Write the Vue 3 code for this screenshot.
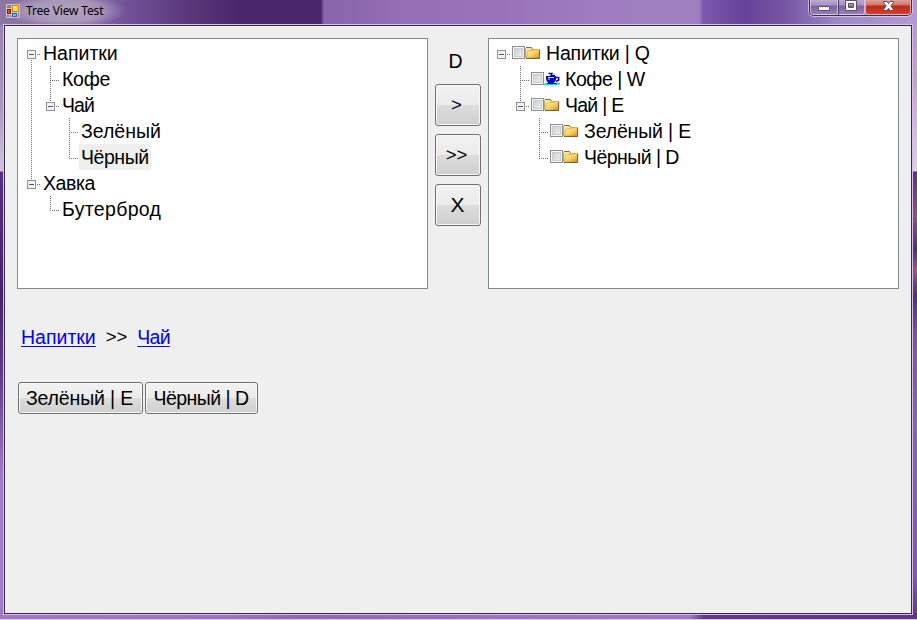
<script setup>
// Guide codes per indent cell: v = through line, t = branch, l = last branch,
// a/b = line above/below an expander, x = expander, blank = nothing.
// "track" is the letter spacing of the label in pixels.
const leftTree = [
  { cells: ['xb'], label: 'Напитки', track: 0 },
  { cells: ['v', 't'], label: 'Кофе', track: -0.25 },
  { cells: ['v', 'xa'], label: 'Чай', track: -0.9 },
  { cells: ['v', '', 't'], label: 'Зелёный', track: 0 },
  { cells: ['v', '', 'l'], label: 'Чёрный', track: -0.45, selected: true },
  { cells: ['xa'], label: 'Хавка', track: -0.4 },
  { cells: ['', 'l'], label: 'Бутерброд', track: 0.33 },
]
const rightTree = [
  { cells: ['x'], label: 'Напитки | Q', icon: 'folder', track: -0.18 },
  { cells: ['', 't'], label: 'Кофе | W', icon: 'cup', track: -0.45 },
  { cells: ['', 'xa'], label: 'Чай | E', icon: 'folder', track: -0.75 },
  { cells: ['', '', 't'], label: 'Зелёный | E', icon: 'folder', track: -0.15 },
  { cells: ['', '', 'l'], label: 'Чёрный | D', icon: 'folder', track: -0.55 },
]
const trees = [leftTree, rightTree]

function guidePath(c) {
  if (c === 'v') return 'M9.5 0V26'
  if (c === 't') return 'M9.5 0V26M11 14.5H19'
  if (c === 'l') return 'M9.5 0V14M9 14.5H19'
  let d = c.includes('x') ? 'M15 14.5H19' : ''
  if (c.includes('a')) d += 'M9.5 0V10'
  if (c.includes('b')) d += 'M9.5 20V26'
  return d
}
</script>

<template>
  <div class="window">
    <header class="titlebar">
      <svg class="app-icon" width="14" height="14" viewBox="0 0 14 14" shape-rendering="crispEdges">
        <rect width="14" height="14" fill="#c9c2c7" />
        <rect x="1" y="1" width="4" height="3" fill="#8d7e91" />
        <rect x="1" y="5" width="4" height="5" fill="#8e1710" />
        <rect x="2" y="6" width="2" height="3" fill="#e0493a" />
        <rect x="1" y="11" width="2" height="2" fill="#8d7e91" />
        <rect x="4" y="11" width="1" height="2" fill="#8d7e91" />
        <rect x="6" y="1" width="7" height="7" fill="#c98a08" />
        <rect x="7" y="2" width="5" height="5" fill="#ffd84e" />
        <rect x="7" y="2" width="3" height="2" fill="#fff0a0" />
        <rect x="6" y="9" width="5" height="4" fill="#2864c4" />
        <rect x="7" y="10" width="3" height="2" fill="#79b4f5" />
        <rect x="12" y="9" width="1" height="4" fill="#8d7e91" />
      </svg>
      <span class="title">Tree View Test</span>
      <div class="caption">
        <span class="cap min">
          <svg width="13" height="12" viewBox="0 0 13 12"><rect x=".5" y="6.5" width="11" height="4" rx=".5" fill="#fff" stroke="#5a5168" /></svg>
        </span>
        <span class="cap max">
          <svg width="13" height="12" viewBox="0 0 13 12"><path d="M.5 .5H11.5V10.5H.5Z M3.5 3.5V7.5H8.5V3.5Z" fill="#fff" fill-rule="evenodd" stroke="#5a5168" /></svg>
        </span>
        <span class="cap close">
          <svg width="13" height="12" viewBox="0 0 13 12"><path d="M1.5 1.5H4.8L6.5 3.6L8.2 1.5H11.5V2.5L8.8 6L11.5 9.5V10.5H8.2L6.5 8.4L4.8 10.5H1.5V9.5L4.2 6L1.5 2.5Z" fill="#fff" stroke="#554d5e" /></svg>
        </span>
      </div>
    </header>

    <main class="client">
      <section class="top">
        <template v-for="(tree, ti) in trees" :key="ti">
          <div class="tree" :class="{ second: ti === 1 }">
            <div v-for="(row, ri) in tree" :key="ri" class="row">
              <svg v-for="(c, ci) in row.cells" :key="ci" width="19" height="26" viewBox="0 0 19 26" shape-rendering="crispEdges">
                <path :d="guidePath(c)" stroke="#6e6e6e" stroke-dasharray="1 1" fill="none" />
                <g v-if="c.includes('x')">
                  <rect x="5.5" y="10.5" width="8" height="8" fill="#f3f3f3" stroke="#919191" />
                  <rect x="7" y="14" width="5" height="1" fill="#3b58a8" />
                </g>
              </svg>
              <template v-if="row.icon">
                <span class="check"></span>
                <svg v-if="row.icon === 'folder'" class="node-icon" width="16" height="16" viewBox="0 0 16 16">
                  <defs>
                    <linearGradient id="fold" x1="0" y1="0" x2="1" y2="1">
                      <stop offset="0" stop-color="#fff2ad" /><stop offset=".5" stop-color="#fbd265" /><stop offset="1" stop-color="#d88a12" />
                    </linearGradient>
                  </defs>
                  <path d="M.5 3.5L1.5 2.5H6L7.5 4.5H13.5V12.5H.5Z" fill="#f9e7a0" stroke="#b79a55" stroke-width=".8" />
                  <path d="M1 2.5H6.5L7.5 3.8" fill="none" stroke="#6a5a38" stroke-width=".8" />
                  <path d="M2.5 6.5L4.5 5.5H8.5L10 4.5H14.8L14.2 13.2H1.2Z" fill="url(#fold)" stroke="#c08a28" stroke-width=".5" />
                  <path d="M1 13.5H14.6V5" fill="none" stroke="#5a4828" stroke-width=".8" />
                </svg>
                <svg v-else class="node-icon" width="16" height="16" viewBox="0 0 16 16">
                  <path d="M0 13.5H13.5L16 12" fill="none" stroke="#00e5ee" stroke-width="1.6" />
                  <path d="M2 5H12V8C12 10 10.5 11 9.5 12H14L12 13H4L1 12H4.5C3 11 2 9 2 7Z" fill="#0808c8" />
                  <path d="M12 6.5H14.7V9L12 10.5" fill="none" stroke="#0808b0" stroke-width="1.5" />
                  <path d="M4.5 2.5H8L7 4.5H11" fill="none" stroke="#080888" stroke-width="1.3" />
                  <path d="M4 6.5H10M4 8H6" stroke="#e8f0ff" stroke-width=".9" />
                </svg>
              </template>
              <span class="label" :class="{ selected: row.selected }" :style="{ letterSpacing: row.track + 'px' }">{{ row.label }}</span>
            </div>
          </div>
          <div v-if="ti === 0" class="middle">
            <div class="key">D</div>
            <button class="btn square">&gt;</button>
            <button class="btn square">&gt;&gt;</button>
            <button class="btn square big">X</button>
          </div>
        </template>
      </section>

      <nav class="crumbs">
        <a class="link">Напитки</a><span class="sep">&gt;&gt;</span><a class="link short">Чай</a>
      </nav>

      <section class="choices">
        <button class="btn choice-a">Зелёный | E</button>
        <button class="btn choice-b">Чёрный | D</button>
      </section>
    </main>
  </div>
</template>

<style>
body { margin: 0; overflow: hidden; }
</style>

<style scoped>
.window {
  box-sizing: border-box;
  width: 917px;
  height: 620px;
  padding: 0 4px 5px 3px;
  font-family: "Liberation Sans", Arial, sans-serif;
  font-size: 19.5px;
  color: #000;
  background:
    linear-gradient(#d8c8e4, #d8c8e4) 0 619px / 917px 1px no-repeat,
    radial-gradient(ellipse at center, rgba(255,255,255,.36) 0%, rgba(255,255,255,.26) 45%, rgba(255,255,255,0) 70%) 5px -6px / 122px 34px no-repeat,
    linear-gradient(90deg, #8c75a4 0, #8a70a3 90px, #72539a 125px, #5a3779 190px, #4a276b 240px, #4a276b 321px, #8965ad 324px, #8b67ac 350px, #946fb5 400px, #9873b9 500px, #9f7dc0 600px, #a080c0 699px, #7a58ac 703px, #66439a 745px, #7556a2 785px, #a08bc7 840px, #b199d5 917px) 0 0 / 917px 25px no-repeat,
    linear-gradient(#9784b2 0, #a996c1 80px, #d0c4de 146px, #582f84 147px, #482269 270px, #643a89 350px, #a07bc4 450px, #a07bc4 590px) 0 25px / 4px 590px no-repeat,
    linear-gradient(#b399d5 0, #c3a0cd 50px, #ddcfe6 146px, #5b327f 147px, #8f5085 190px, #523078 225px, #9b538b 245px, #523078 270px, #8050a0 310px, #8a63b2 400px, #8555b0 550px, #623987 590px) 912px 25px / 5px 590px no-repeat,
    linear-gradient(90deg, #a07bc4 0, #9a74bd 230px, #8e69af 300px, #9a74bd 500px, #a07bc4 690px, #60398a 704px, #5d3687 917px);
}
.titlebar { display: flex; height: 24px; align-items: flex-start; }
.app-icon { margin: 4px 0 0 3px; }
.title { margin-left: 6px; font: 12px/22px "Noto Sans", "Open Sans", sans-serif; letter-spacing: -.15px; }
.caption {
  display: flex;
  box-sizing: border-box;
  width: 103px;
  height: 16px;
  margin-left: auto;
  margin-right: 1px;
  overflow: hidden;
  border: 1px solid #3b2c50;
  border-top: 0;
  border-radius: 0 0 5px 5px;
  box-shadow: 0 0 0 1px rgba(236,224,246,.65);
}
.cap { display: flex; box-sizing: border-box; justify-content: center; height: 15px; border: 1px solid rgba(235,222,245,.65); border-top: 0; border-radius: 0 0 3px 3px; background: linear-gradient(#bca9d0 0, #a892c2 5px, #7d649f 6px, #9a80be 15px); }
.min { width: 28px; }
.max { width: 27px; border-left-color: #4b3a62; }
.close { width: 46px; border-left-color: #5b2030; border-color: #e8aaa4; background: linear-gradient(#e0a09a 0, #d2766c 5px, #b82a1c 6px, #d8452f 15px); }
.client {
  box-sizing: border-box;
  width: 910px;
  height: 591px;
  padding: 12px;
  background: #efefef;
  border: 1px solid #d3c2e0;
  box-shadow: inset 0 0 0 1px #37284a;
}
.top { display: flex; padding: 1px 0 0 1px; }
.tree { box-sizing: border-box; width: 411px; height: 251px; padding: 1px 0 0 4px; border: 1px solid #828790; background: #fff; }
.second { padding-left: 3px; }
.row { display: flex; height: 26px; }
.row svg { flex: none; }
.label { padding: 0 2px; line-height: 26px; white-space: pre; height: 26px; }
.selected { background: #efefef; }
.check {
  box-sizing: border-box;
  width: 13px;
  height: 13px;
  margin: 6px 0 0 1px;
  border: 1px solid #8e8f8f;
  background: linear-gradient(135deg, #c4c8ce, #f4f4f4);
  box-shadow: inset 0 0 0 1px #f4f4f4, inset 0 0 0 2px #c9cdd2;
}
.row .node-icon { margin: 5px 3px 0 0; }
.middle { width: 60px; display: flex; flex-direction: column; align-items: center; }
.key { height: 46px; line-height: 47px; padding-right: 5px; }
.btn {
  box-sizing: border-box;
  padding: 0;
  border: 1px solid #707070;
  border-radius: 3px;
  font: inherit;
  color: #000;
  white-space: pre;
  background: linear-gradient(#f2f2f2 0, #ebebeb 50%, #dddddd 50%, #cfcfcf 100%);
  box-shadow: inset 0 0 0 1px #f8f8f8;
}
.square { width: 46px; height: 42px; margin-bottom: 8px; padding-right: 3px; font-size: 18.5px; }
.big { font-size: 21px; padding-right: 1px; }
.crumbs { display: flex; height: 24px; margin: 37px 0 0 5px; line-height: 22px; }
.link { color: #00f; text-decoration: underline 1px #00f; text-underline-offset: 2px; }
.short { letter-spacing: -.75px; }
.sep { margin: 0 10px; font-size: 18.5px; }
.choices { display: flex; gap: 2px; margin: 32px 0 0 2px; }
.choices .btn { height: 32px; }
.choice-a { width: 125px; letter-spacing: -.15px; padding-right: 2px; }
.choice-b { width: 113px; letter-spacing: -.55px; padding-right: 1px; }
</style>
